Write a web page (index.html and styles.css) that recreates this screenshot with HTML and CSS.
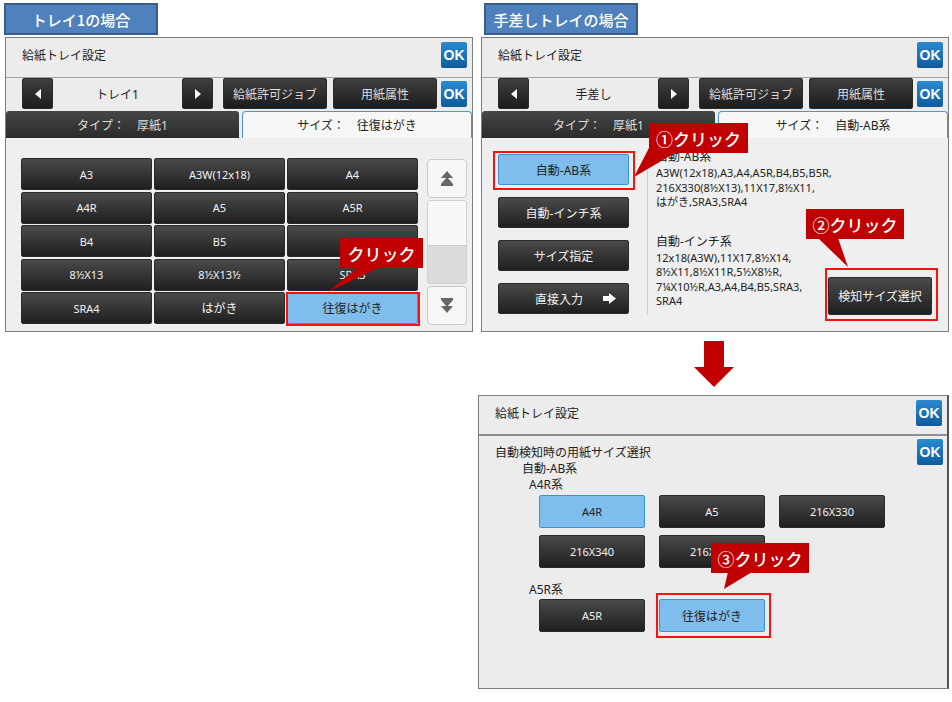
FILE: index.html
```html
<!DOCTYPE html>
<html lang="ja">
<head>
  <meta charset="UTF-8">
  <meta name="viewport" content="width=device-width, initial-scale=1.0">
  <title>給紙トレイ設定</title>
  <link rel="stylesheet" href="styles.css">
</head>
<body>
  <main class="sheet">

    <!-- トレイ1 -->
    <section class="case case-tray1">
      <h2 class="case-label">トレイ1の場合</h2>
      <div class="panel">
        <div class="panel-header">
          <span class="panel-title">給紙トレイ設定</span>
          <span class="ok-btn">OK</span>
        </div>
        <div class="toolbar">
          <span class="btn arrow-btn">
            <svg width="6" height="10" viewBox="0 0 6 10"><polygon points="6,0 6,10 0,5" fill="#fff"/></svg>
          </span>
          <span class="tray-name">トレイ1</span>
          <span class="btn arrow-btn">
            <svg width="6" height="10" viewBox="0 0 6 10"><polygon points="0,0 0,10 6,5" fill="#fff"/></svg>
          </span>
          <span class="btn tool-btn tool-first">給紙許可ジョブ</span>
          <span class="btn tool-btn tool-second">用紙属性</span>
          <span class="ok-btn ok-toolbar">OK</span>
        </div>
        <div class="tabs">
          <div class="tab tab-dark">タイプ：　厚紙1</div>
          <div class="tab tab-light">サイズ：　往復はがき</div>
        </div>
        <div class="content content-sizes">
          <div class="size-grid">
            <span class="btn">A3</span>
            <span class="btn">A3W(12x18)</span>
            <span class="btn">A4</span>
            <span class="btn">A4R</span>
            <span class="btn">A5</span>
            <span class="btn">A5R</span>
            <span class="btn">B4</span>
            <span class="btn">B5</span>
            <span class="btn">B5R</span>
            <span class="btn">8½X13</span>
            <span class="btn">8½X13½</span>
            <span class="btn">SRA3</span>
            <span class="btn">SRA4</span>
            <span class="btn btn-jp">はがき</span>
            <span class="btn btn-jp btn-selected marked mark-tray">往復はがき</span>
          </div>
          <div class="scroller">
            <span class="scroll-btn">
              <svg width="12" height="15" viewBox="0 0 12 15"><polygon points="6,0 12,7 0,7" fill="#666"/><polygon points="6,6 12,13 0,13" fill="#666"/><rect x="0" y="13" width="12" height="2" fill="#666"/></svg>
            </span>
            <div class="scroll-track"><div class="scroll-thumb"></div></div>
            <span class="scroll-btn">
              <svg width="12" height="15" viewBox="0 0 12 15"><rect x="0" y="0" width="12" height="2" fill="#666"/><polygon points="0,2 12,2 6,9" fill="#666"/><polygon points="0,8 12,8 6,15" fill="#666"/></svg>
            </span>
          </div>
        </div>
      </div>
    </section>

    <!-- 手差しトレイ -->
    <section class="case case-manual">
      <h2 class="case-label">手差しトレイの場合</h2>
      <div class="panel">
        <div class="panel-header">
          <span class="panel-title">給紙トレイ設定</span>
          <span class="ok-btn">OK</span>
        </div>
        <div class="toolbar">
          <span class="btn arrow-btn">
            <svg width="6" height="10" viewBox="0 0 6 10"><polygon points="6,0 6,10 0,5" fill="#fff"/></svg>
          </span>
          <span class="tray-name">手差し</span>
          <span class="btn arrow-btn">
            <svg width="6" height="10" viewBox="0 0 6 10"><polygon points="0,0 0,10 6,5" fill="#fff"/></svg>
          </span>
          <span class="btn tool-btn tool-first">給紙許可ジョブ</span>
          <span class="btn tool-btn tool-second">用紙属性</span>
          <span class="ok-btn ok-toolbar">OK</span>
        </div>
        <div class="tabs">
          <div class="tab tab-dark">タイプ：　厚紙1</div>
          <div class="tab tab-light">サイズ：　自動-AB系</div>
        </div>
        <div class="content content-modes">
          <div class="mode-list">
            <span class="btn btn-jp btn-selected marked mark-mode">自動-AB系</span>
            <span class="btn btn-jp">自動-インチ系</span>
            <span class="btn btn-jp">サイズ指定</span>
            <span class="btn btn-jp btn-go">
              <span>直接入力</span>
              <svg width="13" height="11" viewBox="0 0 13 11"><rect x="0" y="3" width="7" height="5" fill="#fff"/><polygon points="6,0 13,5.5 6,11" fill="#fff"/></svg>
            </span>
          </div>
          <div class="divider"></div>
          <div class="size-info">
            <p class="info-head">自動-AB系</p>
            <p class="info-list">A3W(12x18),A3,A4,A5R,B4,B5,B5R,<br>216X330(8½X13),11X17,8½X11,<br>はがき,SRA3,SRA4</p>
            <p class="info-head info-gap">自動-インチ系</p>
            <p class="info-list">12x18(A3W),11X17,8½X14,<br>8½X11,8½X11R,5½X8½R,<br>7¼X10½R,A3,A4,B4,B5,SRA3,<br>SRA4</p>
          </div>
          <span class="btn btn-jp btn-detect marked mark-detect">検知サイズ選択</span>
        </div>
      </div>

      <div class="next-arrow">
        <svg width="40" height="46" viewBox="0 0 40 46"><rect x="10" y="0" width="20" height="27" fill="#c00000"/><polygon points="0,26 40,26 20,46" fill="#c00000"/></svg>
      </div>

      <!-- 自動検知時の用紙サイズ選択 -->
      <div class="panel result-panel">
        <div class="panel-header result-header">
          <span class="panel-title">給紙トレイ設定</span>
          <span class="ok-btn">OK</span>
        </div>
        <div class="auto-select">
          <div class="auto-head">
            <div>
              <p class="auto-title">自動検知時の用紙サイズ選択</p>
              <p class="auto-sub">自動-AB系</p>
            </div>
            <span class="ok-btn">OK</span>
          </div>
          <p class="group-label">A4R系</p>
          <div class="pick-grid">
            <span class="btn btn-selected">A4R</span>
            <span class="btn">A5</span>
            <span class="btn">216X330</span>
            <span class="btn">216X340</span>
            <span class="btn">216X356</span>
          </div>
          <p class="group-label group-gap">A5R系</p>
          <div class="pick-grid pick-tail">
            <span class="btn">A5R</span>
            <span class="btn btn-jp btn-selected marked mark-pick">往復はがき</span>
          </div>
        </div>
      </div>
    </section>

    <!-- 操作の吹き出し -->
    <div class="callout callout-tray">クリック</div>
    <div class="callout callout-step1">①クリック</div>
    <div class="callout callout-step2">②クリック</div>
    <div class="callout callout-step3">③クリック</div>
    <svg class="callout-tails" width="952" height="702" viewBox="0 0 952 702">
      <polygon points="358,267 380,267 328,292" fill="#c00000"/>
      <polygon points="650,146 675,153 634,177" fill="#c00000"/>
      <polygon points="818,238 838,238 848,267" fill="#c00000"/>
      <polygon points="728,572 752,572 724,589" fill="#c00000"/>
    </svg>

  </main>
</body>
</html>
```

FILE: styles.css
```css
* {
  box-sizing: border-box;
  margin: 0;
  padding: 0;
}

body {
  font-family: "Noto Sans", "Noto Sans CJK JP", sans-serif;
  background: #fff;
  color: #222;
}

.sheet {
  position: relative;
  width: 952px;
  height: 702px;
  display: grid;
  grid-template-columns: 476px 476px;
  align-items: start;
}

.case {
  display: flex;
  flex-direction: column;
}

.case-label {
  width: 154px;
  height: 32px;
  margin-top: 3px;
  background: #4f81bd;
  border: 2px solid #385d8a;
  color: #fff;
  font-family: "Noto Sans CJK JP", sans-serif;
  font-size: 15px;
  font-weight: 500;
  display: flex;
  align-items: center;
  justify-content: center;
}

.case-tray1 .case-label {
  margin-left: 4px;
}

.case-manual .case-label {
  margin-left: 8px;
}

/* panel frame */

.panel {
  width: 468px;
  height: 295px;
  margin-top: 2px;
  margin-left: 5px;
  border: 1px solid #7d7d7d;
  background: #ececec;
  display: flex;
  flex-direction: column;
}

.panel-header {
  height: 40px;
  flex-shrink: 0;
  border-bottom: 1px solid #a3a3a3;
  display: flex;
  justify-content: space-between;
  align-items: flex-start;
  padding: 4px 5px 0 16px;
}

.panel-title {
  font-size: 12px;
  line-height: 28px;
  color: #222;
}

.ok-btn {
  width: 26px;
  height: 26px;
  flex-shrink: 0;
  background: linear-gradient(#2a8ad2, #0e5b9c);
  border-radius: 2px;
  color: #fff;
  font-family: "Liberation Sans", sans-serif;
  font-weight: bold;
  font-size: 14px;
  line-height: 26px;
  text-align: center;
}

/* dark touch buttons */

.btn {
  display: flex;
  align-items: center;
  justify-content: center;
  background: linear-gradient(#4a4a4a, #1f1f1f);
  border: 1px solid #2a2a2a;
  border-radius: 2px;
  color: #f2f2f2;
  font-size: 11px;
  white-space: nowrap;
}

.btn-jp {
  font-size: 12px;
}

.btn-selected {
  background: #7ebdec;
  border-color: #3b93d6;
  color: #222;
}

/* red frame drawn round a button to press */
.marked {
  position: relative;
}

.marked::after {
  content: "";
  position: absolute;
  border: 2px solid #ff1010;
}

.mark-tray::after {
  inset: -1px -3px -3px -2px;
}

.mark-mode::after {
  inset: -4px -7px -6px -6px;
}

.mark-detect::after {
  inset: -10px -7px -7px -4px;
}

.mark-pick::after {
  inset: -7px -7px -7px -4px;
}

/* toolbar */

.toolbar {
  height: 33px;
  flex-shrink: 0;
  display: flex;
  align-items: flex-start;
  padding-left: 16px;
}

.arrow-btn {
  width: 31px;
  height: 31px;
  background: linear-gradient(#3f3f3f, #1c1c1c);
}

.tray-name {
  width: 129px;
  height: 31px;
  display: flex;
  align-items: center;
  justify-content: center;
  font-size: 12px;
}

.tool-btn {
  width: 104px;
  height: 31px;
  font-size: 12px;
  color: #ddd;
  background: linear-gradient(#3f3f3f, #1c1c1c);
}

.tool-first {
  margin-left: 10px;
}

.tool-second {
  margin-left: 6px;
}

.ok-toolbar {
  margin: 3px 0 0 4px;
}

/* tabs */

.tabs {
  height: 27px;
  flex-shrink: 0;
  display: flex;
  gap: 3px;
}

.tab {
  display: flex;
  align-items: center;
  justify-content: center;
  font-size: 12px;
}

.tab-dark {
  width: 233px;
  background: linear-gradient(#464646, #2b2b2b);
  border-radius: 3px 3px 0 0;
  color: #ddd;
}

.tab-light {
  flex: 1;
  background: #f7f7f7;
  border: 1px solid #4a95d6;
  border-bottom: none;
  border-radius: 4px 4px 0 0;
  color: #222;
}

.content {
  flex: 1;
  background: #efefef;
  display: flex;
}

/* size grid with scroller */

.content-sizes {
  padding: 20px 0 0 15px;
  align-items: flex-start;
}

.size-grid {
  display: grid;
  grid-template-columns: repeat(3, 131px);
  grid-auto-rows: 32px;
  column-gap: 2px;
  row-gap: 1.5px;
}

.scroller {
  width: 40px;
  margin: 1px 0 0 9px;
  display: flex;
  flex-direction: column;
  gap: 2px;
}

.scroll-btn {
  height: 39px;
  display: flex;
  align-items: center;
  justify-content: center;
  background: #f7f7f7;
  border: 1px solid #c9c9c9;
  border-radius: 4px;
}

.scroll-track {
  height: 84px;
  border: 1px solid #cfcfcf;
  border-radius: 3px;
  background: #dcdcdc;
  overflow: hidden;
}

.scroll-thumb {
  height: 45px;
  background: #f8f8f8;
  border-bottom: 1px solid #cfcfcf;
}

/* manual tray modes */

.content-modes {
  padding: 16px;
}

.mode-list {
  width: 131px;
  flex-shrink: 0;
  display: flex;
  flex-direction: column;
  gap: 12px;
}

.mode-list .btn {
  height: 31px;
}

.btn-go {
  justify-content: space-between;
  padding: 0 12px 0 36px;
}

.divider {
  width: 1px;
  flex-shrink: 0;
  background: #cdcdcd;
  margin: 0 8px 0 18px;
}

.size-info {
  flex: 1;
  min-width: 0;
  margin-top: -6px;
  white-space: nowrap;
}

.info-head {
  font-size: 12px;
  line-height: 18px;
}

.info-list {
  font-size: 11px;
  line-height: 14.5px;
}

.info-gap {
  margin-top: 23px;
}

.btn-detect {
  align-self: flex-end;
  width: 104px;
  height: 38px;
  flex-shrink: 0;
}

/* arrow between steps */

.next-arrow {
  width: 471px;
  margin: 9px 0 0 2px;
  height: 46px;
  display: flex;
  justify-content: center;
}

/* auto detect selection */

.result-panel {
  width: 471px;
  height: 294px;
  margin: 8px 0 0 2px;
  border-right: 2px solid #555;
}

.result-header {
  height: 40px;
  border-bottom: 2px solid #8f8f8f;
}

.auto-select {
  flex: 1;
  padding: 3px 4px 0 16px;
  font-size: 12px;
}

.auto-head {
  display: flex;
  justify-content: space-between;
  align-items: flex-start;
}

.auto-title {
  margin-top: 6px;
  line-height: 16px;
}

.auto-sub {
  margin-left: 27px;
  line-height: 16px;
}

.group-label {
  margin-left: 34px;
  line-height: 16px;
}

.group-gap {
  margin-top: 14px;
}

.pick-grid {
  margin: 2px 0 0 44px;
  display: grid;
  grid-template-columns: repeat(3, 106px);
  grid-auto-rows: 33px;
  column-gap: 14px;
  row-gap: 7px;
}

.pick-tail {
  margin-top: 1px;
}

/* red click callouts */

.callout {
  position: absolute;
  height: 30px;
  background: #c00000;
  color: #fff;
  font-family: "Noto Sans CJK JP", sans-serif;
  font-size: 17px;
  font-weight: 500;
  display: flex;
  align-items: center;
  justify-content: center;
  z-index: 2;
}

.callout-tray {
  left: 340px;
  top: 238px;
  width: 83px;
}

.callout-step1 {
  left: 649px;
  top: 123px;
  width: 99px;
}

.callout-step2 {
  left: 806px;
  top: 209px;
  width: 98px;
}

.callout-step3 {
  left: 711px;
  top: 543px;
  width: 98px;
}

.callout-tails {
  position: absolute;
  left: 0;
  top: 0;
  z-index: 1;
  pointer-events: none;
}
```
